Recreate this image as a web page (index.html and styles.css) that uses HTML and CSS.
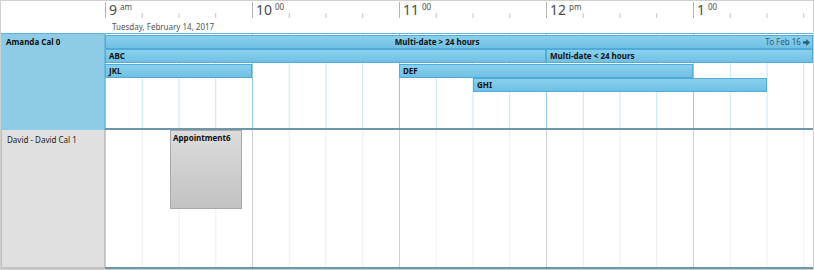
FILE: index.html
```html
<!DOCTYPE html>
<html>
<head>
<meta charset="utf-8">
<link rel="stylesheet" href="styles.css">
</head>
<body>
  <div class="scheduler">
    <div class="head">
      <div class="corner"></div>
      <div class="timescale">
        <div class="hours">
          <div class="hour"><span class="num">9</span><span class="sup">am</span></div>
          <div class="hour"><span class="num">10</span><span class="sup">00</span></div>
          <div class="hour"><span class="num">11</span><span class="sup">00</span></div>
          <div class="hour"><span class="num">12</span><span class="sup">pm</span></div>
          <div class="hour"><span class="num">1</span><span class="sup">00</span></div>
        </div>
        <div class="date">Tuesday, February 14, 2017</div>
      </div>
    </div>

    <div class="row row-blue">
      <div class="resource">Amanda Cal 0</div>
      <div class="lane">
        <div class="event multi" style="left: 0px; right: 0px; top: 1px;">
          <span class="title">Multi-date &gt; 24 hours</span>
          <span class="more">To Feb 16
            <svg class="arrow" width="7" height="7" viewBox="0 0 7 7"><path d="M0 2.2H3.2V0L7 3.5 3.2 7V4.8H0Z" fill="#2f5f7a"/></svg>
          </span>
        </div>
        <div class="event" style="left: 0px; width: 441px; top: 15px;">ABC</div>
        <div class="event" style="left: 441px; right: 0px; top: 15px;">Multi-date &lt; 24 hours</div>
        <div class="event" style="left: 0px; width: 147px; top: 30px;">JKL</div>
        <div class="event" style="left: 294px; width: 294px; top: 30px;">DEF</div>
        <div class="event" style="left: 368px; width: 294px; top: 44px;">GHI</div>
      </div>
    </div>

    <div class="row row-gray">
      <div class="resource">David - David Cal 1</div>
      <div class="lane">
        <div class="appt" style="left: 65px; width: 72px; top: 0px; height: 79px;">Appointment6</div>
      </div>
    </div>
  </div>
</body>
</html>
```

FILE: styles.css
```css
:root {
  --hour: 147px;
  --quarter: 36.75px;
}

html, body {
  margin: 0;
  padding: 0;
  background: #ffffff;
  font-family: "Noto Sans", "Open Sans", sans-serif;
}

.scheduler {
  width: 814px;
  height: 270px;
  box-sizing: border-box;
  border: 1px solid #cfcfcf;
  display: flex;
  flex-direction: column;
  overflow: hidden;
}

/* header */

.head {
  display: flex;
  height: 32px;
  flex: none;
}

.corner {
  width: 104px;
  flex: none;
}

.timescale {
  flex: 1;
  display: flex;
  flex-direction: column;
  overflow: hidden;
}

.hours {
  display: flex;
  height: 17px;
  padding-top: 1px;
  box-sizing: border-box;
  background-image: linear-gradient(to right, #c4c4c4 1px, transparent 1px);
  background-size: var(--quarter) 5px;
  background-position: 0 12px;
  background-repeat: repeat-x;
}

.hour {
  width: var(--hour);
  flex: none;
  box-sizing: border-box;
  border-left: 1px solid #b4b4b4;
  padding-left: 3px;
  display: flex;
  align-items: flex-start;
  color: #4a4a4a;
}

.hour .num {
  font-size: 14px;
  line-height: 15px;
  background: #fff;
}

.hour .sup {
  font-size: 8px;
  line-height: 9px;
  margin-left: 3px;
}

.date {
  height: 15px;
  box-sizing: border-box;
  padding: 2px 0 0 7px;
  font-size: 8px;
  line-height: 13px;
  color: #555;
}

/* resource rows */

.row {
  display: flex;
  flex: none;
}

.row-blue {
  height: 96px;
  border-top: 1px solid #5eb3da;
}

.row-gray {
  flex: 1;
}

.resource {
  width: 104px;
  flex: none;
  box-sizing: border-box;
  font-size: 8px;
  padding: 3px 5px;
  line-height: 10px;
}

.row-blue .resource {
  background: #8ecbe6;
  border-right: 1px solid #6fbbe0;
  font-weight: bold;
  color: #111;
}

.row-gray .resource {
  background: #e0e0e0;
  border: 1px solid #bdbdbd;
  border-top: none;
  border-bottom: 2px solid #c4c4c4;
  color: #222;
  padding-top: 5px;
}

.lane {
  flex: 1;
  position: relative;
  background-repeat: repeat;
}

.row-blue .lane {
  border-bottom: 2px solid #6f95a8;
  background-image:
    linear-gradient(to right, #8fcbe6 1px, transparent 1px),
    linear-gradient(to right, #c3e5f3 1px, transparent 1px);
  background-size: var(--hour) 100%, var(--quarter) 100%;
}

.row-gray .lane {
  border-bottom: 2px solid #6f95a8;
  background-image:
    linear-gradient(to right, #cfcfcf 1px, transparent 1px),
    linear-gradient(to right, #ececec 1px, transparent 1px);
  background-size: var(--hour) 100%, var(--quarter) 100%;
}

/* events */

.event {
  position: absolute;
  height: 14px;
  box-sizing: border-box;
  border: 1px solid #4fabd8;
  background: linear-gradient(#8ad0ee, #70c0e4);
  font-size: 8px;
  font-weight: bold;
  color: #111;
  line-height: 12px;
  padding-left: 3px;
  white-space: nowrap;
  overflow: hidden;
}

.event.multi {
  display: flex;
  padding-right: 2px;
}

.multi .title {
  flex: 1;
  text-align: center;
}

.multi .more {
  font-weight: normal;
  color: #2f5f7a;
}

.arrow {
  vertical-align: -0.5px;
}

.appt {
  position: absolute;
  box-sizing: border-box;
  border: 1px solid #a9a9a9;
  background: linear-gradient(#dcdcdc, #c2c2c2);
  font-size: 8px;
  font-weight: bold;
  color: #111;
  padding: 2px 2px;
  line-height: 10px;
}
```
